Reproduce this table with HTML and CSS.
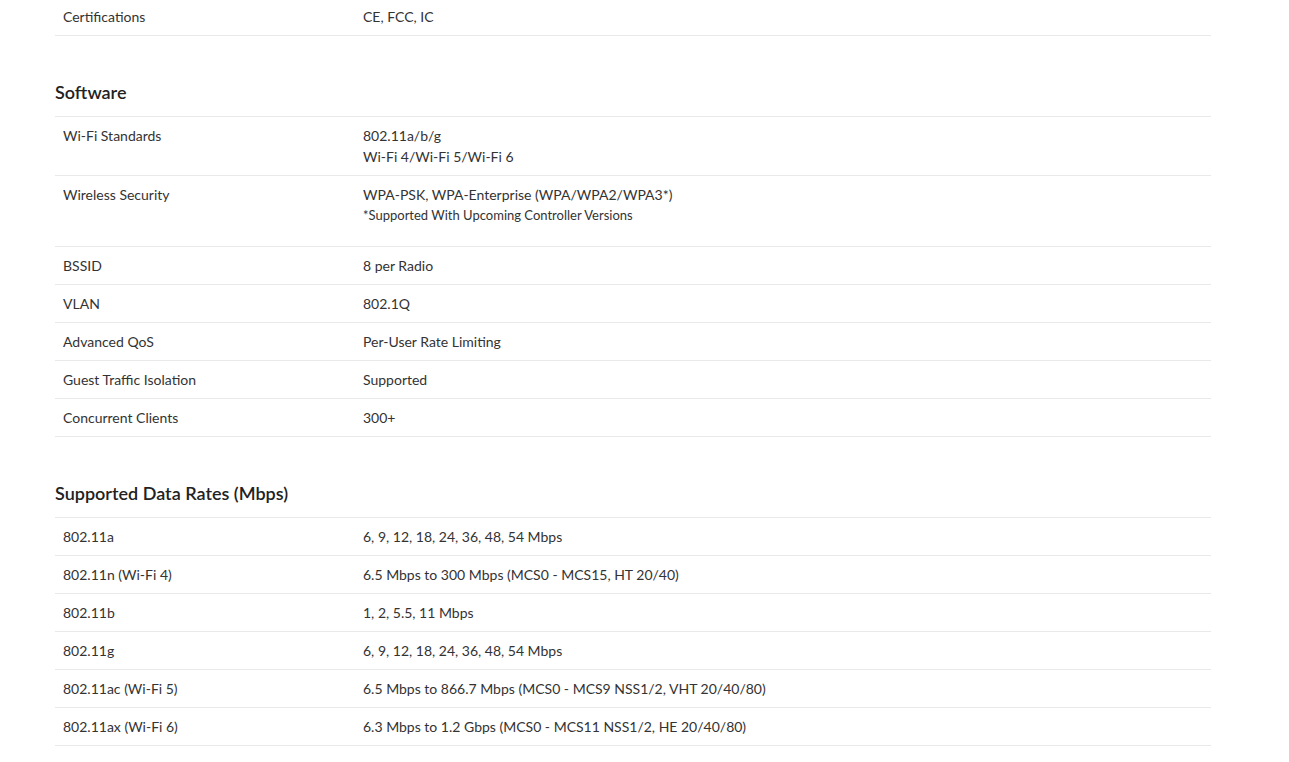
FILE: index.html
```html
<!DOCTYPE html>
<html lang="en">
<head>
<meta charset="utf-8">
<title>Specifications</title>
<link rel="stylesheet" href="styles.css">
</head>
<body>
<div class="specs">
  <table class="spec-table">
    <tr><td class="label">Certifications</td><td class="value">CE, FCC, IC</td></tr>
  </table>

  <h3 class="section-title">Software</h3>
  <table class="spec-table">
    <tr><td class="label">Wi-Fi Standards</td><td class="value">802.11a/b/g<br>Wi-Fi 4/Wi-Fi 5/Wi-Fi 6</td></tr>
    <tr><td class="label">Wireless Security</td><td class="value">WPA-PSK, WPA-Enterprise (WPA/WPA2/WPA3*)<span class="note">*Supported With Upcoming Controller Versions</span></td></tr>
    <tr><td class="label">BSSID</td><td class="value">8 per Radio</td></tr>
    <tr><td class="label">VLAN</td><td class="value">802.1Q</td></tr>
    <tr><td class="label">Advanced QoS</td><td class="value">Per-User Rate Limiting</td></tr>
    <tr><td class="label">Guest Traffic Isolation</td><td class="value">Supported</td></tr>
    <tr><td class="label">Concurrent Clients</td><td class="value">300+</td></tr>
  </table>

  <h3 class="section-title">Supported Data Rates (Mbps)</h3>
  <table class="spec-table">
    <tr><td class="label">802.11a</td><td class="value">6, 9, 12, 18, 24, 36, 48, 54 Mbps</td></tr>
    <tr><td class="label">802.11n (Wi-Fi 4)</td><td class="value">6.5 Mbps to 300 Mbps (MCS0 - MCS15, HT 20/40)</td></tr>
    <tr><td class="label">802.11b</td><td class="value">1, 2, 5.5, 11 Mbps</td></tr>
    <tr><td class="label">802.11g</td><td class="value">6, 9, 12, 18, 24, 36, 48, 54 Mbps</td></tr>
    <tr><td class="label">802.11ac (Wi-Fi 5)</td><td class="value">6.5 Mbps to 866.7 Mbps (MCS0 - MCS9 NSS1/2, VHT 20/40/80)</td></tr>
    <tr><td class="label">802.11ax (Wi-Fi 6)</td><td class="value">6.3 Mbps to 1.2 Gbps (MCS0 - MCS11 NSS1/2, HE 20/40/80)</td></tr>
  </table>
</div>
</body>
</html>
```

FILE: styles.css
```css
html, body {
  margin: 0;
  padding: 0;
  background: #ffffff;
}

body {
  font-family: Lato, "Open Sans", "Liberation Sans", sans-serif;
  color: #333333;
  font-size: 14px;
}

.specs {
  width: 1156px;
  margin: -2px 0 0 55px;
}

.spec-table {
  width: 100%;
  border-collapse: collapse;
}

.spec-table td {
  padding: 8px 8px;
  line-height: 21px;
  vertical-align: top;
  border-bottom: 1px solid #e9e9e9;
}

.spec-table .label {
  width: 284px;
}

.note {
  display: block;
  font-size: 13px;
  line-height: 21px;
  margin-bottom: 12px;
}

.section-title {
  margin: 44px 0 0;
  padding: 0 0 12px;
  font-size: 18px;
  line-height: 24px;
  font-weight: 600;
  color: #222222;
  border-bottom: 1px solid #e9e9e9;
}
```
